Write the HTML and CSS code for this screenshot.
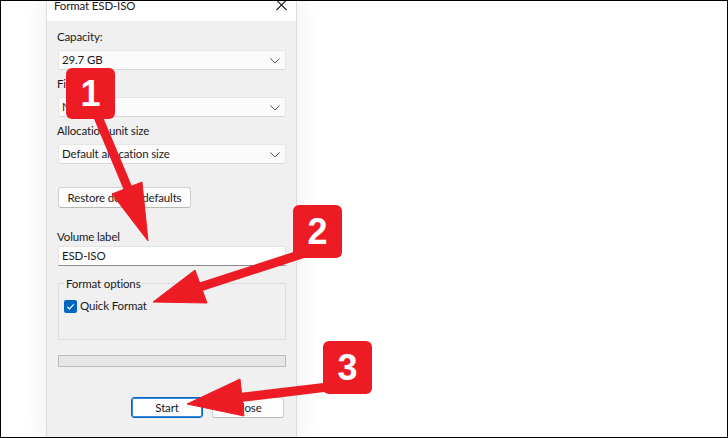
FILE: index.html
```html
<html lang="en">
  <head>
    <meta charset="UTF-8" />
    <title>Format ESD-ISO</title>
    <link rel="stylesheet" href="styles.css">
  </head>
  <body>
    <div class="screen">
      <div class="dialog">
        <div class="titlebar">
          <span class="title">Format ESD-ISO</span>
          <svg class="close" width="11" height="11" viewBox="0 0 11 11">
            <path d="M0.5 0 L10.5 10 M10.5 0 L0.5 10" stroke="#1a1a1a" stroke-width="1.1" fill="none" />
          </svg>
        </div>
        <div class="content">
          <div class="label">Capacity:</div>
          <div class="select">
            <span>29.7 GB</span>
            <svg class="chevron" width="10" height="6" viewBox="0 0 10 6"><path d="M0.5 0.5 L5 5 L9.5 0.5" stroke="#555" fill="none" /></svg>
          </div>
          <div class="label gap">File system</div>
          <div class="select">
            <span>NTFS</span>
            <svg class="chevron" width="10" height="6" viewBox="0 0 10 6"><path d="M0.5 0.5 L5 5 L9.5 0.5" stroke="#555" fill="none" /></svg>
          </div>
          <div class="label gap">Allocation unit size</div>
          <div class="select">
            <span>Default allocation size</span>
            <svg class="chevron" width="10" height="6" viewBox="0 0 10 6"><path d="M0.5 0.5 L5 5 L9.5 0.5" stroke="#555" fill="none" /></svg>
          </div>
          <div class="restore-row">
            <button class="btn restore">Restore device defaults</button>
          </div>
          <div class="label volume">Volume label</div>
          <div class="input">ESD-ISO</div>
          <div class="group">
            <span class="legend">Format options</span>
            <div class="check-row">
              <span class="checkbox">
                <svg width="13" height="13" viewBox="0 0 13 13"><path d="M3.2 6.8 L5.4 9 L9.8 4.4" stroke="#fff" stroke-width="1.2" fill="none" /></svg>
              </span>
              <span>Quick Format</span>
            </div>
          </div>
          <div class="progress"></div>
          <div class="actions">
            <button class="btn primary">Start</button>
            <button class="btn">Close</button>
          </div>
        </div>
      </div>

      <svg class="arrows" width="728" height="438" viewBox="0 0 728 438">
        <g fill="#ed1c24" stroke="#ed1c24">
          <line x1="96" y1="112" x2="132" y2="198" stroke-width="9" />
          <polygon points="148,241 112,194 142,182" stroke-width="1" />
          <line x1="302" y1="254" x2="200" y2="287" stroke-width="9" />
          <polygon points="153,302 195,270 207,303" stroke-width="1" />
          <line x1="328" y1="387" x2="236" y2="398" stroke-width="9" />
          <polygon points="187,404 240,379 244,416" stroke-width="1" />
        </g>
      </svg>
      <div class="badge one">1</div>
      <div class="badge two">2</div>
      <div class="badge three">3</div>
    </div>
  </body>
</html>
```
FILE: styles.css
```css
body {
  margin: 0;
}
* {
  box-sizing: border-box;
}
.screen {
  position: relative;
  width: 728px;
  height: 438px;
  border: 1px solid #000;
  background: #fff;
  display: flex;
  padding-left: 45px;
  overflow: hidden;
  font-family: Lato, "Noto Sans", sans-serif;
  font-size: 11.5px;
  letter-spacing: -0.15px;
  color: #1a1a1a;
}
.dialog {
  width: 251px;
  height: 100%;
  display: flex;
  flex-direction: column;
  border-left: 1px solid #dcdcdc;
  border-right: 1px solid #dcdcdc;
  box-shadow: 0 0 22px 6px rgba(0, 0, 0, 0.05);
}
.titlebar {
  height: 20px;
  background: #fff;
  display: flex;
  justify-content: space-between;
  align-items: flex-start;
  padding: 0 9px 0 7px;
}
.title {
  line-height: 12px;
  margin-top: -1px;
}
.close {
  margin-top: -1px;
}
.content {
  flex: 1;
  background: #f0f0f0;
  padding: 8px 10px 0 11px;
  display: flex;
  flex-direction: column;
}
.label {
  line-height: 16px;
  margin-left: -1px;
  margin-bottom: 5px;
  white-space: nowrap;
}
.label.gap {
  margin-top: 6px;
}
.select {
  height: 20px;
  background: #fbfbfb;
  border: 1px solid #e6e6e6;
  border-bottom-color: #d8d8d8;
  border-radius: 2px;
  display: flex;
  align-items: center;
  justify-content: space-between;
  padding: 0 5px 0 3px;
  line-height: 16px;
}
.chevron {
  margin-top: 1px;
}
.restore-row {
  margin-top: 23px;
  display: flex;
}
.btn {
  font-family: inherit;
  font-size: inherit;
  letter-spacing: inherit;
  color: #1a1a1a;
  height: 21px;
  line-height: 16px;
  padding: 0 6px;
  white-space: nowrap;
  background: #fdfdfd;
  border: 1px solid #d0d0d0;
  border-bottom-color: #b8b8b8;
  border-radius: 3px;
}
.restore {
  width: 133px;
}
.label.volume {
  margin-top: 21px;
  margin-bottom: 1px;
}
.input {
  height: 20px;
  background: #fff;
  border: 1px solid #e3e3e3;
  border-bottom-color: #8a8a8a;
  padding: 0 3px;
  line-height: 17px;
}
.group {
  margin-top: 17px;
  height: 57px;
  border: 1px solid #dcdcdc;
  display: flex;
  flex-direction: column;
}
.legend {
  align-self: flex-start;
  margin: -8px 0 0 5px;
  padding: 0 2px;
  line-height: 16px;
  background: #f0f0f0;
}
.check-row {
  display: flex;
  align-items: center;
  gap: 3px;
  margin: 7px 0 0 5px;
  line-height: 14px;
}
.checkbox {
  width: 13px;
  height: 13px;
  background: #0067c0;
  border-radius: 2px;
  display: flex;
}
.progress {
  margin-top: 15px;
  height: 12px;
  background: #e6e6e6;
  border: 1px solid #bcbcbc;
}
.actions {
  margin-top: 30px;
  display: flex;
  justify-content: flex-end;
  gap: 9px;
  padding-right: 2px;
}
.actions .btn {
  width: 72px;
}
.btn.primary {
  border: 1px solid #0067c0;
  box-shadow: inset 0 0 0 1px #3c8cd8;
}
.arrows {
  position: absolute;
  left: -1px;
  top: -1px;
  pointer-events: none;
}
.badge {
  position: absolute;
  width: 49px;
  height: 51px;
  background: #ed1c24;
  border-radius: 6px;
  color: #fff;
  font-family: "Liberation Sans", Arial, sans-serif;
  font-weight: bold;
  font-size: 36px;
  letter-spacing: 0;
  display: flex;
  align-items: center;
  justify-content: center;
}
.badge.one {
  left: 65px;
  top: 67px;
}
.badge.two {
  left: 292px;
  top: 204px;
  height: 53px;
}
.badge.three {
  left: 322px;
  top: 340px;
  height: 53px;
}
```
